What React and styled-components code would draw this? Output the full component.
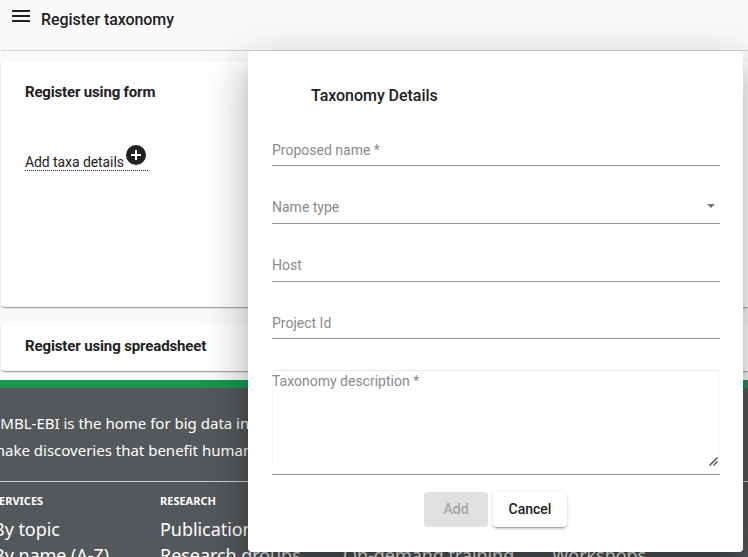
import React from "react";
import styled, { createGlobalStyle } from "styled-components";

const GlobalStyle = createGlobalStyle`
  *, *::before, *::after { box-sizing: border-box; }
  html, body { margin: 0; padding: 0; }
  body {
    background: #fafafa;
    color: #212121;
    font-family: Roboto, "Liberation Sans", sans-serif;
    overflow: hidden;
  }
`;

const Page = styled.div`
  position: relative;
  width: 748px;
  height: 557px;
  overflow: hidden;
  display: flex;
  flex-direction: column;
`;

const Header = styled.header`
  display: flex;
  align-items: flex-start;
  flex: none;
  height: 51px;
  margin-left: 1px;
  padding-left: 11px;
  border-bottom: 1px solid #d5d5d5;
`;

const MenuIcon = styled.svg`
  display: block;
  width: 18px;
  height: 12px;
  margin-top: 10px;
  fill: #212121;
`;

const PageTitle = styled.h1`
  margin: 8px 0 0 11px;
  font-size: 16px;
  font-weight: 470;
  line-height: 24px;
  letter-spacing: -0.07px;
  white-space: nowrap;
`;

const Cards = styled.main`
  display: flex;
  flex-direction: column;
  flex: none;
  gap: 16px;
  height: 329px;
  margin-left: 1px;
  padding-top: 10px;
`;

const Card = styled.section`
  height: ${(p) => p.$height}px;
  padding: ${(p) => p.$top}px 24px 0;
  background: #fff;
  border-radius: 4px 0 0 4px;
  box-shadow:
    0 2px 1px -1px rgba(0, 0, 0, 0.2),
    0 1px 1px 0 rgba(0, 0, 0, 0.14),
    0 1px 3px 0 rgba(0, 0, 0, 0.12);
`;

const CardTitle = styled.h2`
  margin: 0;
  font-size: 15px;
  font-weight: 700;
  line-height: 20px;
  letter-spacing: ${(p) => p.$spacing};
  white-space: nowrap;
`;

const AddLink = styled.a`
  display: flex;
  align-items: flex-start;
  width: 123px;
  height: 28px;
  margin-top: 41px;
  border-bottom: 1px dotted #212121;
  white-space: nowrap;
`;

const AddLabel = styled.span`
  width: 101px;
  padding-top: 9px;
  font-size: 14px;
  font-weight: 400;
  line-height: 20px;
  letter-spacing: -0.08px;
`;

const PlusIcon = styled.svg`
  display: block;
  width: 20px;
  height: 20px;
  margin-top: 2px;
`;

const Footer = styled.footer`
  flex: none;
  height: 177px;
  padding-top: 22px;
  overflow: hidden;
  background: #54585a;
  border-top: 8px solid #18974c;
  color: #fff;
  font-family: "Noto Sans", "Open Sans", sans-serif;
`;

const Mission = styled.p`
  height: 71px;
  margin: 0 0 0 -8px;
  font-size: 15px;
  line-height: 27px;
  white-space: nowrap;
`;

const MissionLine = styled.span`
  display: block;
  margin-left: ${(p) => p.$shift || 0}px;
`;

const FooterNav = styled.nav`
  display: grid;
  grid-template-columns: 167px 183px 209px 200px;
  margin-left: -7px;
  padding-top: 9px;
  border-top: 1px solid #d0d0ce;
`;

const FooterColumn = styled.div`
  display: flex;
  flex-direction: column;
`;

const FooterHeading = styled.h3`
  height: 20px;
  margin: 0;
  font-size: 11px;
  font-weight: 700;
  line-height: 20px;
`;

const FooterLink = styled.a`
  margin-top: 5px;
  height: 21px;
  font-size: 18px;
  line-height: 27px;
  letter-spacing: -0.06px;
  white-space: nowrap;
`;

const Dialog = styled.div`
  position: absolute;
  left: 248px;
  top: 51px;
  display: flex;
  flex-direction: column;
  width: 495px;
  height: 501px;
  padding: 0 23px 0 24px;
  background: #fff;
  border-radius: 4px;
  box-shadow:
    0 11px 15px -7px rgba(0, 0, 0, 0.2),
    0 24px 38px 3px rgba(0, 0, 0, 0.14),
    0 9px 46px 8px rgba(0, 0, 0, 0.12);
`;

const DialogTitle = styled.h2`
  height: 57px;
  margin: 0;
  padding: 33px 0 0 39px;
  font-size: 16px;
  font-weight: 470;
  line-height: 24px;
  letter-spacing: -0.04px;
`;

const Field = styled.div`
  display: flex;
  align-items: flex-end;
  justify-content: space-between;
  height: ${(p) => p.$height}px;
  padding: 0 5px ${(p) => p.$bottom || 5}px 0;
  border-bottom: 1px solid #949494;
`;

const FieldLabel = styled.label`
  color: #8a8a8a;
  font-size: 14px;
  font-weight: 400;
  line-height: 20px;
  white-space: nowrap;
`;

const SelectArrow = styled.svg`
  width: 8px;
  height: 4px;
  margin-bottom: 9px;
  fill: #757575;
`;

const AreaField = styled.div`
  height: 136px;
  padding-top: 31px;
  border-bottom: 1px solid #949494;
`;

const AreaBox = styled.div`
  display: flex;
  justify-content: space-between;
  width: 447px;
  height: 97px;
  padding-top: 1px;
  box-shadow:
    inset 1px 0 #f4f4f4,
    inset -1px 0 #f4f4f4,
    inset 0 1px #ececec;
`;

const ResizeGrip = styled.svg`
  align-self: flex-end;
  width: 9px;
  height: 9px;
  margin: 0 1px 1px 0;
`;

const Actions = styled.div`
  display: flex;
  gap: 5px;
  padding: 17px 0 0 152px;
`;

const Button = styled.button`
  width: ${(p) => p.$width}px;
  height: 35px;
  padding: 0;
  border: 0;
  border-radius: 4px;
  background: ${(p) => (p.disabled ? "#e0e0e0" : "#fff")};
  color: ${(p) => (p.disabled ? "#a6a6a6" : "#212121")};
  box-shadow: ${(p) =>
    p.disabled
      ? "none"
      : "0 3px 1px -2px rgba(0,0,0,.2), 0 2px 2px 0 rgba(0,0,0,.14), 0 1px 5px 0 rgba(0,0,0,.12)"};
  font-family: inherit;
  font-size: 14px;
  font-weight: 480;
  line-height: 35px;
`;

const fields = [
  { label: "Proposed name *", height: 58 },
  { label: "Name type", height: 58, bottom: 6, select: true },
  { label: "Host", height: 58, bottom: 6 },
  { label: "Project Id", height: 57 },
];

const columns = [
  { heading: "SERVICES", links: ["By topic", "By name (A-Z)"] },
  { heading: "RESEARCH", links: ["Publications", "Research groups"] },
  { heading: "TRAINING", links: ["Live training", "On-demand training"] },
  { heading: "INDUSTRY", links: ["Members Area", "Workshops"] },
];

export default function App() {
  return (
    <Page>
      <GlobalStyle />
      <Header>
        <MenuIcon viewBox="0 0 18 12">
          <path d="M0 0h18v2H0zM0 5h18v2H0zM0 10h18v2H0z" />
        </MenuIcon>
        <PageTitle>Register taxonomy</PageTitle>
      </Header>
      <Cards>
        <Card $height={246} $top={21}>
          <CardTitle $spacing="-0.17px">Register using form</CardTitle>
          <AddLink>
            <AddLabel>Add taxa details</AddLabel>
            <PlusIcon viewBox="0 0 20 20">
              <circle cx="10" cy="10" r="10" fill="#212121" />
              <path d="M9 5h2v4h4v2h-4v4H9v-4H5V9h4z" fill="#fff" />
            </PlusIcon>
          </AddLink>
        </Card>
        <Card $height={48} $top={13}>
          <CardTitle $spacing="-0.13px">Register using spreadsheet</CardTitle>
        </Card>
      </Cards>
      <Footer>
        <Mission>
          <MissionLine>EMBL-EBI is the home for big data in biology.</MissionLine>
          <MissionLine $shift={-1}>make discoveries that benefit humankind.</MissionLine>
        </Mission>
        <FooterNav>
          {columns.map((c) => (
            <FooterColumn key={c.heading}>
              <FooterHeading>{c.heading}</FooterHeading>
              {c.links.map((l) => (
                <FooterLink key={l}>{l}</FooterLink>
              ))}
            </FooterColumn>
          ))}
        </FooterNav>
      </Footer>
      <Dialog role="dialog">
        <DialogTitle>Taxonomy Details</DialogTitle>
        {fields.map((f) => (
          <Field key={f.label} $height={f.height} $bottom={f.bottom}>
            <FieldLabel>{f.label}</FieldLabel>
            {f.select && (
              <SelectArrow viewBox="0 0 8 4">
                <path d="M0 0h8L4 4z" />
              </SelectArrow>
            )}
          </Field>
        ))}
        <AreaField>
          <AreaBox>
            <FieldLabel>Taxonomy description *</FieldLabel>
            <ResizeGrip viewBox="0 0 9 9">
              <path d="M0.5 8.5l8-8M4.5 8.5l4-4" stroke="#444" strokeWidth="1.3" fill="none" />
            </ResizeGrip>
          </AreaBox>
        </AreaField>
        <Actions>
          <Button disabled $width={64}>Add</Button>
          <Button $width={74}>Cancel</Button>
        </Actions>
      </Dialog>
    </Page>
  );
}
